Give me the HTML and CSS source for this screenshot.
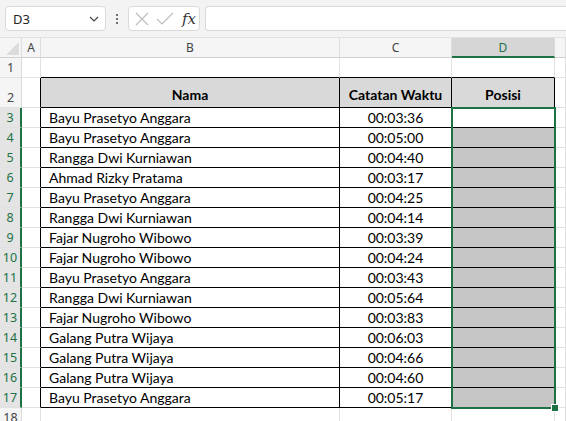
FILE: index.html
```html
<!DOCTYPE html>
<html>
<head>
<meta charset="utf-8">
<link rel="stylesheet" href="styles.css">
</head>
<body>
<div class="app">
  <div class="toolbar">
    <div class="namebox">
      <span class="nb-text">D3</span>
      <svg class="chev" width="10" height="6" viewBox="0 0 10 6"><path d="M1 1 L5 5 L9 1" fill="none" stroke="#444" stroke-width="1.2"/></svg>
    </div>
    <div class="vdots"><i></i><i></i><i></i></div>
    <div class="fxbox">
      <svg width="14" height="14" viewBox="0 0 14 14"><path d="M1 1 L13 13 M13 1 L1 13" stroke="#bdbdbd" stroke-width="1.2" fill="none"/></svg>
      <svg width="18" height="14" viewBox="0 0 18 14"><path d="M1 7 L6 12 L17 1" stroke="#bdbdbd" stroke-width="1.2" fill="none"/></svg>
      <span class="fx">fx</span>
    </div>
    <div class="formula"></div>
  </div>
  <div class="sheet">
    <div class="grid">
      <div class="ch corner"><span class="tri"></span></div>
      <div class="ch">A</div>
      <div class="ch">B</div>
      <div class="ch">C</div>
      <div class="ch sel">D</div>
      <div class="ch end"></div>

      <div class="rh">1</div>
      <div class="c"></div>
      <div class="c bb"></div>
      <div class="c bb"></div>
      <div class="c bb"></div>
      <div class="c"></div>

      <div class="rh tall">2</div>
      <div class="c tall br"></div>
      <div class="c tall th br bb">Nama</div>
      <div class="c tall th br bb">Catatan Waktu</div>
      <div class="c tall th br bb">Posisi</div>
      <div class="c tall"></div>

      <div class="rh rs">3</div><div class="c br"></div><div class="c name br bb">Bayu Prasetyo Anggara</div><div class="c time br bb">00:03:36</div><div class="c br bb"></div><div class="c"></div>
      <div class="rh rs">4</div><div class="c br"></div><div class="c name br bb">Bayu Prasetyo Anggara</div><div class="c time br bb">00:05:00</div><div class="c pos br bb"></div><div class="c"></div>
      <div class="rh rs">5</div><div class="c br"></div><div class="c name br bb">Rangga Dwi Kurniawan</div><div class="c time br bb">00:04:40</div><div class="c pos br bb"></div><div class="c"></div>
      <div class="rh rs">6</div><div class="c br"></div><div class="c name br bb">Ahmad Rizky Pratama</div><div class="c time br bb">00:03:17</div><div class="c pos br bb"></div><div class="c"></div>
      <div class="rh rs">7</div><div class="c br"></div><div class="c name br bb">Bayu Prasetyo Anggara</div><div class="c time br bb">00:04:25</div><div class="c pos br bb"></div><div class="c"></div>
      <div class="rh rs">8</div><div class="c br"></div><div class="c name br bb">Rangga Dwi Kurniawan</div><div class="c time br bb">00:04:14</div><div class="c pos br bb"></div><div class="c"></div>
      <div class="rh rs">9</div><div class="c br"></div><div class="c name br bb">Fajar Nugroho Wibowo</div><div class="c time br bb">00:03:39</div><div class="c pos br bb"></div><div class="c"></div>
      <div class="rh rs">10</div><div class="c br"></div><div class="c name br bb">Fajar Nugroho Wibowo</div><div class="c time br bb">00:04:24</div><div class="c pos br bb"></div><div class="c"></div>
      <div class="rh rs">11</div><div class="c br"></div><div class="c name br bb">Bayu Prasetyo Anggara</div><div class="c time br bb">00:03:43</div><div class="c pos br bb"></div><div class="c"></div>
      <div class="rh rs">12</div><div class="c br"></div><div class="c name br bb">Rangga Dwi Kurniawan</div><div class="c time br bb">00:05:64</div><div class="c pos br bb"></div><div class="c"></div>
      <div class="rh rs">13</div><div class="c br"></div><div class="c name br bb">Fajar Nugroho Wibowo</div><div class="c time br bb">00:03:83</div><div class="c pos br bb"></div><div class="c"></div>
      <div class="rh rs">14</div><div class="c br"></div><div class="c name br bb">Galang Putra Wijaya</div><div class="c time br bb">00:06:03</div><div class="c pos br bb"></div><div class="c"></div>
      <div class="rh rs">15</div><div class="c br"></div><div class="c name br bb">Galang Putra Wijaya</div><div class="c time br bb">00:04:66</div><div class="c pos br bb"></div><div class="c"></div>
      <div class="rh rs">16</div><div class="c br"></div><div class="c name br bb">Galang Putra Wijaya</div><div class="c time br bb">00:04:60</div><div class="c pos br bb"></div><div class="c"></div>
      <div class="rh rs">17</div><div class="c br"></div><div class="c name br bb">Bayu Prasetyo Anggara</div><div class="c time br bb">00:05:17</div><div class="c pos br bb"></div><div class="c"></div>

      <div class="rh">18</div><div class="c"></div><div class="c"></div><div class="c"></div><div class="c"></div><div class="c"></div>
    </div>
    <div class="selection"><span class="handle"></span></div>
  </div>
</div>
</body>
</html>
```

FILE: styles.css
```css
html, body {
  margin: 0;
  padding: 0;
  width: 566px;
  height: 421px;
  overflow: hidden;
  background: #ffffff;
}
.app {
  width: 566px;
  height: 421px;
  overflow: hidden;
  font-family: "Noto Sans", "Open Sans", sans-serif;
}
.toolbar {
  height: 38px;
  box-sizing: border-box;
  background: #f3f3f3;
  display: flex;
  align-items: flex-start;
  padding: 6px 0 0 5px;
  border-bottom: 1px solid #e2e2e2;
}
.namebox {
  width: 101px;
  height: 25px;
  box-sizing: border-box;
  background: #fff;
  border: 1px solid #dadada;
  border-radius: 4px;
  display: flex;
  align-items: center;
  justify-content: space-between;
  padding: 0 6px 0 7px;
}
.nb-text {
  font-size: 13px;
  color: #222;
}
.vdots {
  width: 22px;
  height: 25px;
  display: flex;
  flex-direction: column;
  align-items: center;
  justify-content: center;
  gap: 2px;
}
.vdots i {
  display: block;
  width: 2px;
  height: 2px;
  background: #444;
  border-radius: 1px;
}
.fxbox {
  width: 72px;
  height: 25px;
  box-sizing: border-box;
  background: #fff;
  border: 1px solid #dadada;
  border-radius: 4px;
  display: flex;
  align-items: center;
  gap: 7px;
  padding: 0 0 0 6px;
}
.fx {
  font-family: "DejaVu Serif", "Liberation Serif", serif;
  font-style: italic;
  font-size: 15px;
  color: #333;
  margin-left: 1px;
}
.formula {
  margin-left: 5px;
  flex: 1;
  height: 25px;
  box-sizing: border-box;
  background: #fff;
  border: 1px solid #dadada;
  border-right: none;
  border-radius: 4px 0 0 4px;
}
.sheet {
  position: relative;
  height: 383px;
  overflow: hidden;
}
.grid {
  display: grid;
  grid-template-columns: 22px 19px 299px 112px 103px 11px;
  grid-template-rows: 20px 20px 30px repeat(15, 20px) 20px;
}
.grid > div {
  box-sizing: border-box;
  border-right: 1px solid #e1e1e1;
  border-bottom: 1px solid #e1e1e1;
}
.ch {
  background: #f5f5f5;
  color: #444;
  font-size: 12px;
  display: flex;
  align-items: center;
  justify-content: center;
  border-right-color: #dcdcdc !important;
  border-bottom-color: #d0d0d0 !important;
}
.ch.sel {
  background: #d6d6d6;
  color: #1e7145;
  border-bottom: 2px solid #1e7145 !important;
}
.corner {
  position: relative;
}
.tri {
  position: absolute;
  right: 2px;
  bottom: 2px;
  width: 0;
  height: 0;
  border-left: 13px solid transparent;
  border-bottom: 13px solid #dcdcdc;
}
.rh {
  background: #f5f5f5;
  color: #444;
  font-size: 12.5px;
  display: flex;
  align-items: flex-end;
  justify-content: center;
  padding-bottom: 1px;
  border-right-color: #dcdcdc !important;
}
.rh.rs {
  background: #e4e4e4;
  color: #1e7145;
  border-right: 2px solid #1e7145 !important;
}
.c {
  font-family: "Lato", "Noto Sans", sans-serif;
  font-size: 14px;
  color: #000;
  display: flex;
  align-items: flex-end;
  padding-bottom: 1px;
  white-space: nowrap;
  overflow: hidden;
}
.grid > .br {
  border-right-color: #000;
}
.grid > .bb {
  border-bottom-color: #000;
}
.th {
  background: #d9d9d9;
  font-weight: bold;
  justify-content: center;
  padding-bottom: 4px;
}
.name {
  padding-left: 8px;
}
.time {
  justify-content: center;
}
.pos {
  background: #c6c6c6;
}
.selection {
  position: absolute;
  left: 451px;
  top: 69px;
  width: 105px;
  height: 302px;
  box-sizing: border-box;
  border: 2px solid #1e7145;
}
.handle {
  position: absolute;
  right: -5px;
  bottom: -5px;
  width: 6px;
  height: 6px;
  background: #1e7145;
  border: 1px solid #fff;
}
```
